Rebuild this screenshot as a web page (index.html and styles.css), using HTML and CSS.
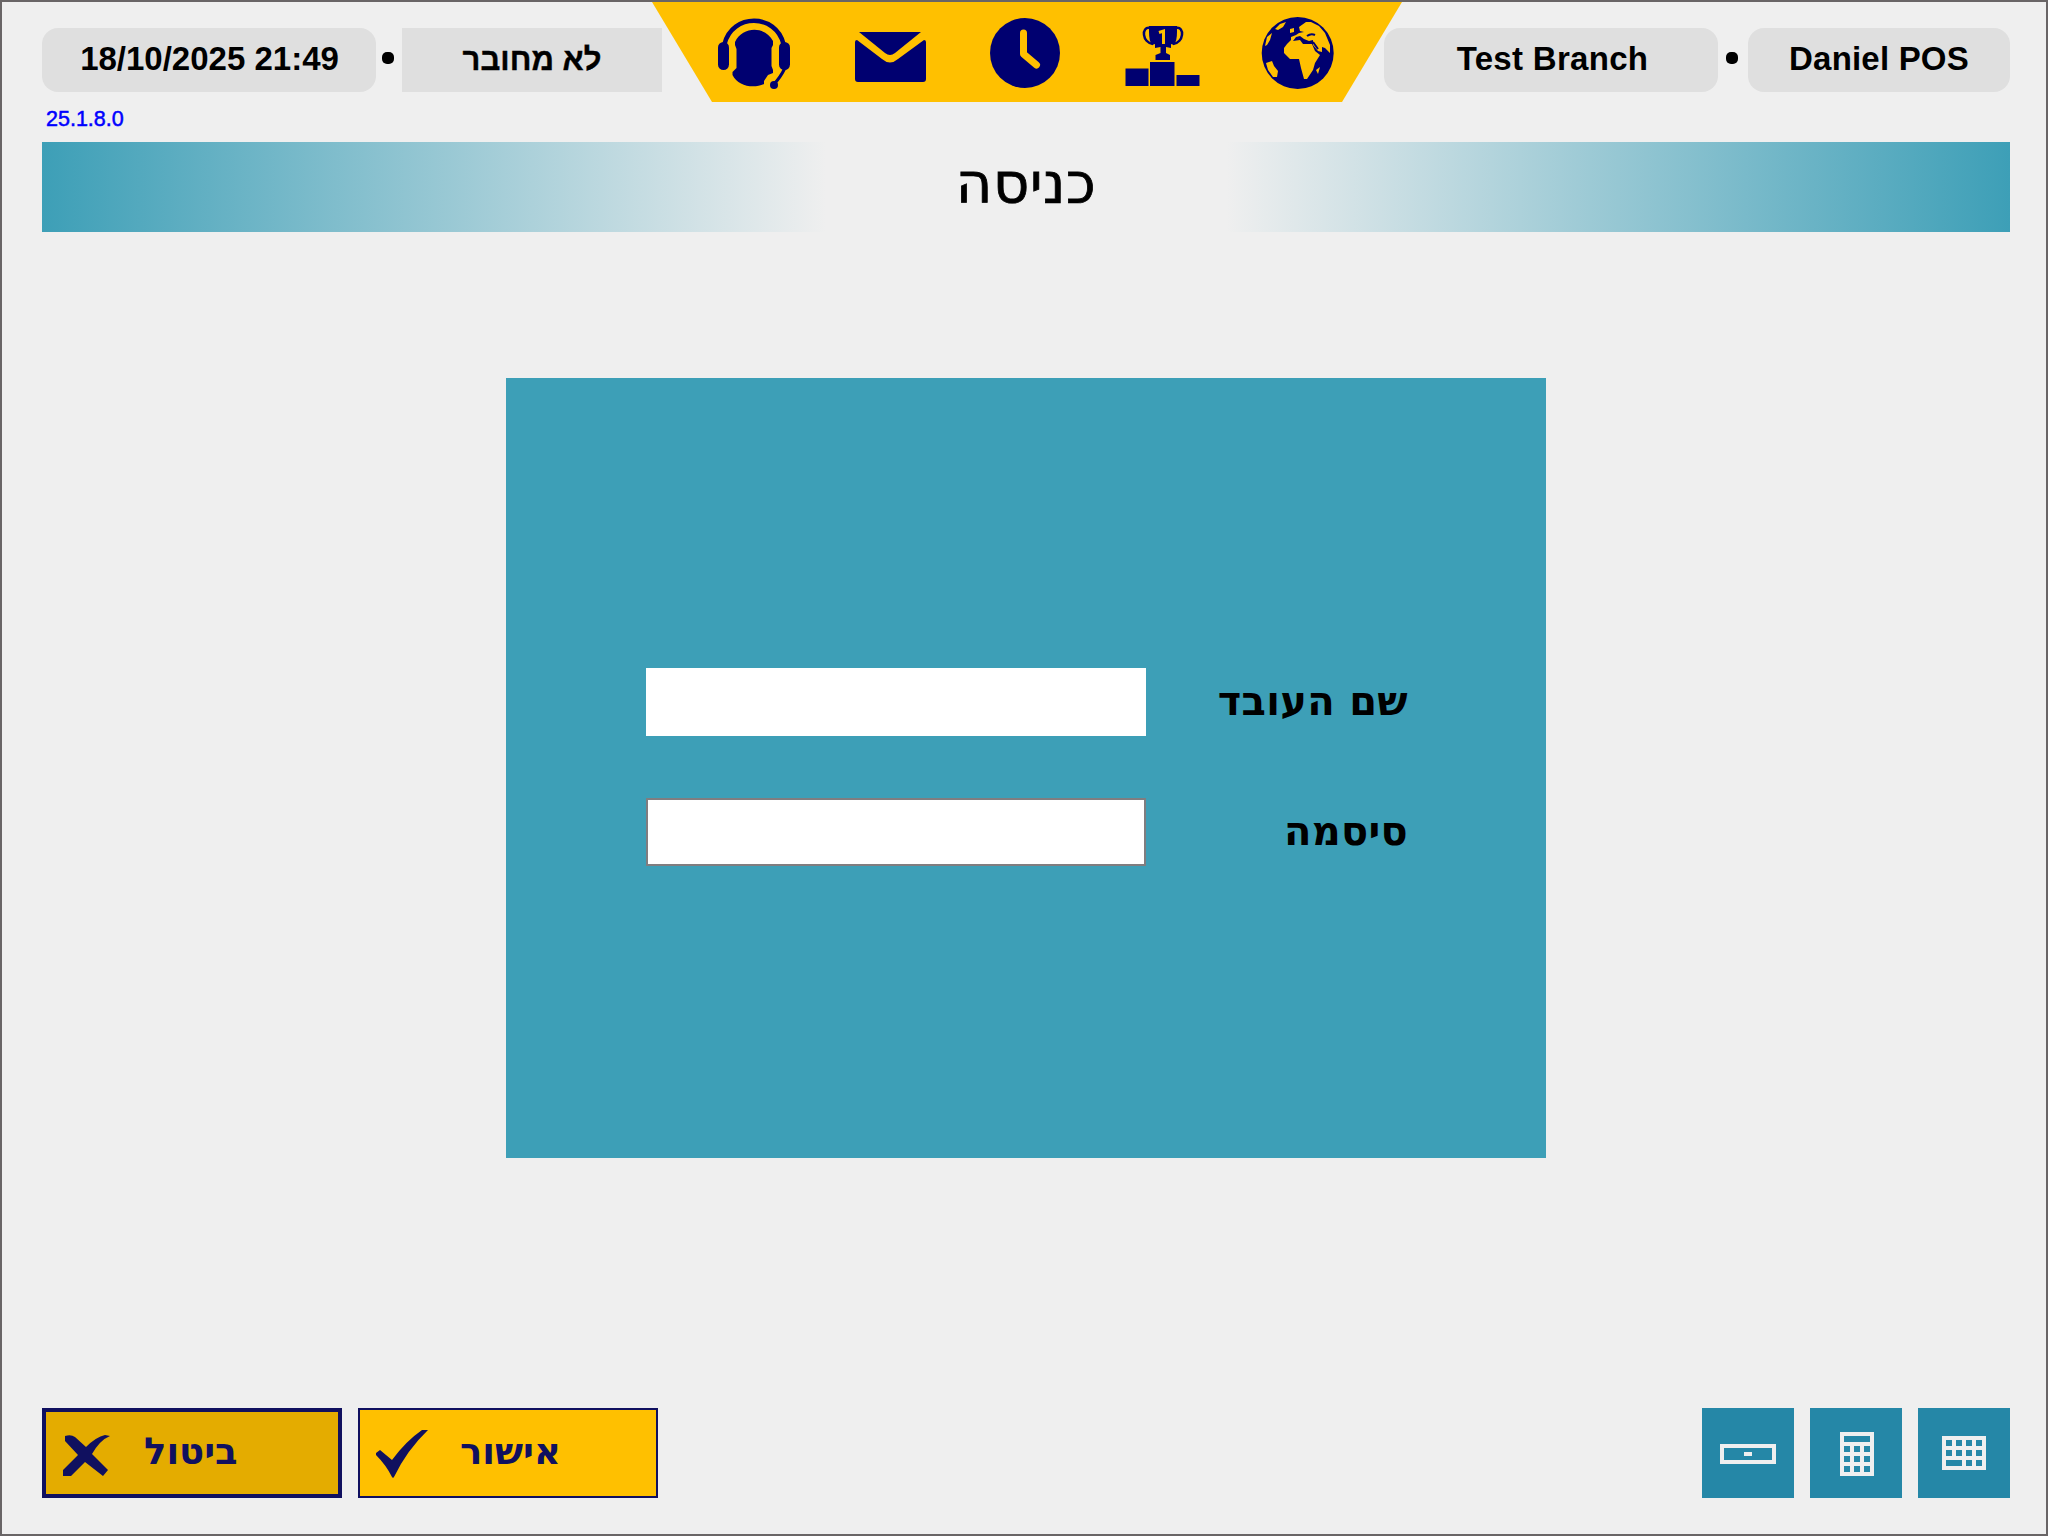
FILE: index.html
```html
<!DOCTYPE html>
<html lang="he">
<head>
<meta charset="utf-8">
<title>כניסה</title>
<link rel="stylesheet" href="styles.css">
</head>
<body>
<div class="window">
  <header class="topbar">
    <div class="chip chip-wide clock">18/10/2025 21:49</div>
    <span class="dot dot-left"></span>
    <div class="chip chip-square status"><span dir="rtl">לא מחובר</span></div>
    <nav class="banner">
      <svg viewBox="0 0 750 100" width="750" height="100">
        <path d="M0 0H750L690 100H60Z" fill="#ffc000"/>
        <g fill="#000070">
          <path d="M72.500 42C80 11 124 11 131.500 42" fill="none" stroke="#000070" stroke-width="4.500"/>
          <rect x="66" y="40" width="11" height="28" rx="5.500"/>
          <rect x="127" y="40" width="11" height="28" rx="5.500"/>
          <path d="M83 40C91 24 113 24 121 39L121 43L119.500 46V64L121 68V71L116 73L112 79V82C101 87 86 84 80.500 73V70L84.500 66V47L83 43Z"/>
          <path d="M133 66Q128 76 122 82" fill="none" stroke="#000070" stroke-width="3"/>
          <circle cx="122" cy="83" r="4"/>
          <path d="M207 30H269L243 51Q238 55 233 51Z"/>
          <path d="M205 38L230 57Q238 64 246 57L272 38Q274 38 274 40V77Q274 80 271 80H206Q203 80 203 77V40Q203 38 205 38Z"/>
          <circle cx="373" cy="51" r="35"/>
          <path d="M371.500 31V52L384.500 63" fill="none" stroke="#ffc000" stroke-width="7" stroke-linecap="round" stroke-linejoin="round"/>
        </g>
        <g fill="#000070">
          <path d="M497 24H525V30Q525 39 522 43L519 42V46L514 45V51L518 53V58H503.500V53L508.500 51V45L503 46V42L500 43Q497 39 497 30Z"/>
          <path d="M498 26C489 24 490 41 501 42M524 26C533 24 532 41 521 42" fill="none" stroke="#000070" stroke-width="2.500"/>
          <path d="M507 30.500L511.500 29V42" fill="none" stroke="#ffc000" stroke-width="3"/>
          <rect x="473.500" y="66.500" width="23" height="17.500"/>
          <rect x="498" y="60" width="24.500" height="24"/>
          <rect x="524.500" y="73" width="23" height="11"/>
        </g>
        <circle cx="645.700" cy="51" r="36" fill="#000070"/>
        <path fill="#ffc000" d="M647 25L654 20H659L667 24L673 31L678 43V51L673 46L670 45V50L666 49L661 43V38L657 39L652 37L648 34L644 35L641 39L648 38L651 42L656 42L660 42L663 49L668 53L663 61L661 68L655 77H652L649 66L647 57H638L632 51V46L635 42L639 38V35L644 33L647 31L652 30L648 29ZM638 27L642 26V30L638 31ZM614 61L620 59L622 64L626 69L625 75H621L616 68ZM613 44L615 35L620 31L618 38L615 43ZM623 27L628 22L634 20L631 25L626 28ZM664 68L668 65L666 72Z"/>
        <path d="M655 34Q659 31 663 33M661 40L666 47" fill="none" stroke="#000070" stroke-width="2"/>
      </svg>
    </nav>
    <div class="chip chip-wide branch">Test Branch</div>
    <span class="dot dot-right"></span>
    <div class="chip pos">Daniel POS</div>
  </header>
  <div class="version">25.1.8.0</div>
  <div class="titlebar"><h1 dir="rtl"><span>כניסה</span></h1></div>
  <main class="content">
    <form class="login" dir="rtl">
      <label class="field-label" for="user"><span>שם העובד</span></label>
      <input class="field focused" id="user" type="text">
      <label class="field-label" for="pass"><span>סיסמה</span></label>
      <input class="field" id="pass" type="password">
    </form>
  </main>
  <footer class="footer">
    <button class="btn cancel">
      <svg viewBox="0 0 50 60" width="50" height="60"><path fill="#10105f" d="M3 13Q9 11 13 14L24 24Q34 14 43 12L48 13Q38 17 30 31L46 47L41 53L23 39L9 53L1 53V47L16 32L3 18Z"/></svg>
      <span class="btn-text">ביטול</span>
    </button>
    <button class="btn confirm">
      <svg viewBox="0 0 54 52" width="54" height="52"><path fill="#10105f" d="M0 26L4 23L16 33Q30 14 46 3H52Q31 23 18 50L17 51L16 50Q10 38 0 28Z"/></svg>
      <span class="btn-text">אישור</span>
    </button>
    <div class="tools">
      <button class="tool"><svg viewBox="0 0 92 90" width="92" height="90"><path fill="#efefef" fill-rule="evenodd" d="M18 36H74V56H18ZM22 40V52H70V40ZM42 44H50V48H42Z"/></svg></button>
      <button class="tool"><svg viewBox="0 0 92 90" width="92" height="90"><path fill="#efefef" d="M30 24H64V68H30Z"/><path fill="#2587a7" d="M34 28h26v6h-26zM34 38h6v6h-6zM44 38h6v6h-6zM54 38h6v6h-6zM34 48h6v6h-6zM44 48h6v6h-6zM54 48h6v6h-6zM34 58h6v6h-6zM44 58h6v6h-6zM54 58h6v6h-6z"/></svg></button>
      <button class="tool"><svg viewBox="0 0 92 90" width="92" height="90"><path fill="#efefef" d="M24 28H68V62H24Z"/><path fill="#2587a7" d="M28 32h6v6h-6zM38 32h6v6h-6zM48 32h6v6h-6zM58 32h6v6h-6zM28 42h6v6h-6zM38 42h6v6h-6zM48 42h6v6h-6zM58 42h6v6h-6zM28 52h16v6h-16zM48 52h6v6h-6zM58 52h6v6h-6z"/></svg></button>
    </div>
  </footer>
</div>
</body>
</html>
```
FILE: styles.css
```css
* { box-sizing: border-box; }
body { margin: 0; font-family: "Liberation Sans", Arial, sans-serif; }
.window {
  width: 2048px;
  height: 1536px;
  border: 2px solid #696566;
  background: #efefef;
  padding: 0 36px 36px 40px;
  display: flex;
  flex-direction: column;
}
.topbar { display: flex; height: 100px; align-items: flex-start; }
.chip {
  width: 262px;
  height: 64px;
  margin-top: 26px;
  border-radius: 16px;
  background: #dfdfdf;
  color: #000;
  font-size: 33px;
  font-weight: bold;
  line-height: 61px;
  text-align: center;
  white-space: nowrap;
}
.chip-wide { width: 334px; }
.chip-square { width: 260px; border-radius: 0; }
.clock { padding-left: 1px; }
.status { font-size: 31px; line-height: 64px; -webkit-text-stroke: 0.4px #000; }
.branch { letter-spacing: 0.3px; padding-left: 3px; position: relative; }
.pos { letter-spacing: 0.2px; }
.dot { width: 12px; height: 12px; border-radius: 5px; background: #000; }
.dot-left { margin: 50px 8px 0 6px; }
.dot-right { margin: 50px 10px 0 8px; }
.banner { width: 750px; height: 100px; margin-left: -10px; margin-right: -18px; }
.banner svg { display: block; }
.version {
  height: 40px;
  padding: 5px 0 0 4px;
  color: #00f;
  font-size: 21.5px;
  line-height: 24px;
  -webkit-text-stroke: 0.5px #00f;
}
.titlebar {
  height: 90px;
  background:
    linear-gradient(to right, #3d9fb7, #efefef) left / 784px 100% no-repeat,
    linear-gradient(to left, #3d9fb7, #efefef) right / 784px 100% no-repeat;
}
h1 {
  margin: 0;
  font: 400 56px/84px "DejaVu Sans", sans-serif;
  letter-spacing: 0.6px;
  text-align: center;
  -webkit-text-stroke: 0.8px #000;
}
.content { flex: 1; padding-top: 146px; display: flex; justify-content: center; align-items: flex-start; }
.login {
  width: 1040px;
  height: 780px;
  background: #3d9fb7;
  padding: 290px 138px 0 140px;
  display: grid;
  grid-template-columns: 262px 500px;
  grid-auto-rows: 68px;
  row-gap: 62px;
}
.field-label { font: bold 40px/67px "DejaVu Sans", sans-serif; letter-spacing: 0.3px; color: #000; white-space: nowrap; }
.field { width: 500px; height: 68px; border: 2px solid #807d80; background: #fff; padding: 0 10px; font-size: 36px; }
.focused { border-color: #fff; }
.footer { display: flex; height: 90px; }
.btn {
  width: 300px;
  height: 90px;
  padding: 0;
  border: 2px solid #10105f;
  background: #ffc000;
  color: #10105f;
  font: bold 37px/80px "DejaVu Sans", sans-serif;
  display: flex;
  align-items: center;
}
.btn-text { padding-bottom: 3px; }
.cancel { border-width: 4px; background: #e4ac00; margin-right: 16px; }
.cancel svg { margin-left: 16px; }
.cancel .btn-text { margin-left: 32px; }
.confirm svg { margin-left: 16px; }
.confirm .btn-text { margin-left: 30px; }
.tools { margin-left: auto; display: flex; gap: 16px; }
.tool { width: 92px; height: 90px; border: 0; padding: 0; background: #2587a7; }
.tool svg { display: block; }
```
